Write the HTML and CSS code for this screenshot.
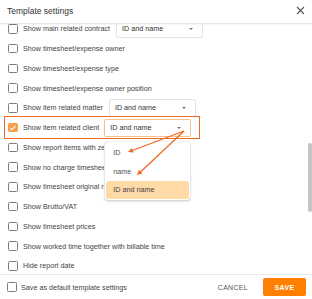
FILE: index.html
```html
<!DOCTYPE html>
<html>
<head>
<meta charset="utf-8">
<link rel="stylesheet" href="styles.css">
</head>
<body>
<div class="dialog">
  <div class="header">
    <span class="title">Template settings</span>
    <svg class="close" width="9" height="9" viewBox="0 0 9 9"><path d="M1 1L8 8M8 1L1 8" stroke="#555" stroke-width="1.1" fill="none"/></svg>
  </div>
  <div class="content">
    <div class="list">
      <div class="row"><span class="cb"></span><span class="label">Show main related contract</span><span class="select"><span class="val">ID and name</span><span class="caret"></span></span></div>
      <div class="row"><span class="cb"></span><span class="label">Show timesheet/expense owner</span></div>
      <div class="row"><span class="cb"></span><span class="label">Show timesheet/expense type</span></div>
      <div class="row"><span class="cb"></span><span class="label">Show timesheet/expense owner position</span></div>
      <div class="row"><span class="cb"></span><span class="label">Show item related matter</span><span class="select"><span class="val">ID and name</span><span class="caret"></span></span></div>
      <div class="row row-active">
        <span class="highlight"></span>
        <span class="cb cb-checked"><svg width="8" height="8" viewBox="0 0 8 8"><path d="M1.3 4.2L3.1 6L6.8 2" stroke="#fff" stroke-width="1.1" fill="none"/></svg></span>
        <span class="label">Show item related client</span>
        <span class="select select-open"><span class="val">ID and name</span><span class="caret"></span>
          <span class="menu">
            <span class="opt">ID</span>
            <span class="opt">name</span>
            <span class="opt opt-sel">ID and name</span>
          </span>
        </span>
      </div>
      <div class="row"><span class="cb"></span><span class="label label-cut">Show report items with zero amount</span></div>
      <div class="row"><span class="cb"></span><span class="label label-cut">Show no charge timesheets</span></div>
      <div class="row"><span class="cb"></span><span class="label label-cut">Show timesheet original rates</span></div>
      <div class="row"><span class="cb"></span><span class="label">Show Brutto/VAT</span></div>
      <div class="row"><span class="cb"></span><span class="label">Show timesheet prices</span></div>
      <div class="row"><span class="cb"></span><span class="label">Show worked time together with billable time</span></div>
      <div class="row"><span class="cb"></span><span class="label">Hide report date</span></div>
    </div>
    <span class="scroll"></span>
  </div>
  <div class="footer">
    <div class="fleft"><span class="cb"></span><span class="label">Save as default template settings</span></div>
    <div class="factions">
      <span class="cancel">CANCEL</span>
      <span class="save">SAVE</span>
    </div>
  </div>
  <svg class="arrows" width="312" height="299" viewBox="0 0 312 299">
    <path d="M184 131L131 151" stroke="#ef6a22" stroke-width="1.3" fill="none"/>
    <polygon points="128,152 133.56,152.59 131.8,147.91" fill="#ef6a22"/>
    <path d="M184 131L140 172.5" stroke="#ef6a22" stroke-width="1.3" fill="none"/>
    <polygon points="137,175 142.36,173.42 138.94,169.77" fill="#ef6a22"/>
  </svg>
</div>
</body>
</html>
```
FILE: styles.css
```css
html, body {
  margin: 0;
  padding: 0;
  background: #fff;
}
body {
  font-family: "Liberation Sans", Arial, sans-serif;
  color: #444;
}
.dialog {
  position: relative;
  width: 312px;
  height: 299px;
  display: flex;
  flex-direction: column;
  overflow: hidden;
}
.header {
  position: relative;
  z-index: 2;
  height: 23px;
  flex: none;
  display: flex;
  align-items: center;
  justify-content: space-between;
  padding: 0 7px 0 7px;
  background: #fff;
  box-shadow: 0 1px 1.5px rgba(0,0,0,0.12);
}
.title {
  font-size: 8.5px;
  color: #333;
  margin-top: -2px;
}
.close {
  margin-top: -2px;
}
.content {
  position: relative;
  flex: 1;
  overflow: hidden;
}
.list {
  margin-top: -4px;
  display: flex;
  flex-direction: column;
}
.row {
  position: relative;
  height: 19.75px;
  display: flex;
  align-items: center;
  padding-left: 8px;
  font-size: 7.2px;
}
.cb {
  flex: none;
  box-sizing: border-box;
  width: 9.5px;
  height: 9.5px;
  border: 1px solid #7d7d7d;
  border-radius: 1.5px;
  background: #fff;
  display: flex;
  align-items: center;
  justify-content: center;
}
.cb-checked {
  background: #f6a04c;
  border-color: #f6a04c;
}
.label {
  margin-left: 5.5px;
  white-space: nowrap;
  color: #3f3f3f;
}
.label-cut {
  max-width: 81px;
  overflow: hidden;
}
.select {
  position: relative;
  box-sizing: border-box;
  flex: none;
  width: 87px;
  height: 18px;
  margin-left: 6px;
  border: 1px solid #e4e4e4;
  border-radius: 2px;
  display: flex;
  align-items: center;
  justify-content: space-between;
  padding: 0 9px 0 5px;
  background: #fff;
}
.select-open {
  border-color: #f7c38c;
  margin-left: 5px;
}
.val {
  color: #333;
  font-size: 7.2px;
}
.caret {
  width: 0;
  height: 0;
  border-left: 2.3px solid transparent;
  border-right: 2.3px solid transparent;
  border-top: 2.6px solid #777;
}
.highlight {
  position: absolute;
  left: 4px;
  top: -1.6px;
  width: 196px;
  height: 23px;
  box-sizing: border-box;
  border: 1.5px solid #ef6a22;
  pointer-events: none;
}
.menu {
  position: absolute;
  z-index: 3;
  left: 0;
  top: 22px;
  width: 85px;
  box-sizing: border-box;
  padding: 2px 1px 1px 1px;
  background: #fff;
  border-radius: 3px;
  box-shadow: 0 1px 3px rgba(0,0,0,0.22), 0 0 1px rgba(0,0,0,0.2);
  display: flex;
  flex-direction: column;
}
.opt {
  height: 18.5px;
  display: flex;
  align-items: center;
  padding-left: 7px;
  font-size: 7.2px;
  color: #505050;
  border-radius: 3px;
}
.opt-sel {
  background: #ffd9a6;
  color: #444;
}
.scroll {
  position: absolute;
  right: 0.5px;
  top: 120px;
  width: 3.5px;
  height: 69px;
  background: #c4c4c4;
  border-radius: 2px;
}
.footer {
  flex: none;
  height: 24px;
  border-top: 1px solid #e6e6e6;
  display: flex;
  align-items: center;
  justify-content: space-between;
  padding: 0 6px 0 7px;
  font-size: 7.2px;
}
.fleft {
  display: flex;
  align-items: center;
}
.fleft .label {
  margin-left: 4.5px;
}
.factions {
  display: flex;
  align-items: center;
}
.cancel {
  color: #555;
  font-size: 7px;
  letter-spacing: 0.3px;
  margin-right: 15px;
}
.save {
  width: 43px;
  height: 18px;
  display: flex;
  align-items: center;
  justify-content: center;
  background: #ff8000;
  color: #fff;
  border-radius: 2px;
  font-size: 7px;
  letter-spacing: 0.4px;
  font-weight: bold;
}
.arrows {
  position: absolute;
  left: 0;
  top: 0;
  z-index: 5;
  pointer-events: none;
}
```
